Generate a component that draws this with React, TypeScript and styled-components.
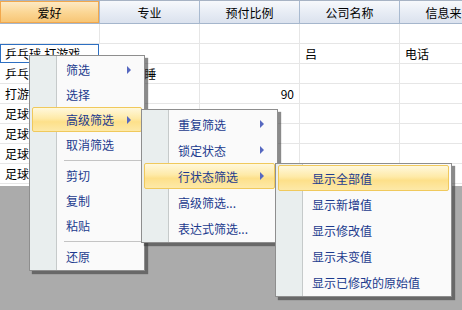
import React from "react";
import styled, { createGlobalStyle, css } from "styled-components";

const GlobalStyle = createGlobalStyle`
  html, body {
    margin: 0;
    padding: 0;
    background: #ababab;
    font-family: "Noto Sans CJK SC", "Noto Sans", sans-serif;
  }
`;

const Page = styled.div`
  position: relative;
  width: 462px;
  height: 310px;
  overflow: hidden;
  background: #ababab;
`;

const Grid = styled.div`
  background: #fff;
  height: 186px;
  font-size: 12px;
  color: #000;
`;

const HeaderRow = styled.div`
  display: flex;
  height: 24px;
  box-sizing: border-box;
  border-top: 1px solid #a7b3c4;
  border-bottom: 1px solid #a5b6cc;
`;

const HeaderCell = styled.div<{ $active?: boolean }>`
  flex: 0 0 100px;
  box-sizing: border-box;
  display: flex;
  align-items: center;
  justify-content: center;
  white-space: nowrap;
  overflow: hidden;
  border-right: 1px solid #a9bad0;
  background: linear-gradient(to bottom, #f7f9fc 0%, #e8edf5 50%, #dbe2ee 100%);
  ${(p) =>
    p.$active &&
    css`
      background: linear-gradient(to bottom, #fdebc9 0%, #fbd796 50%, #f7c472 100%);
      box-shadow: inset 0 0 0 1px #f2a84c;
    `}
`;

const Row = styled.div`
  display: flex;
  height: 20px;
`;

const Cell = styled.div<{ $right?: boolean; $selected?: boolean }>`
  flex: 0 0 100px;
  box-sizing: border-box;
  height: 20px;
  line-height: 19px;
  padding: 0 5px;
  white-space: nowrap;
  overflow: hidden;
  border-right: 1px solid #e6e6e6;
  border-bottom: 1px solid #e6e6e6;
  text-align: ${(p) => (p.$right ? "right" : "left")};
  ${(p) =>
    p.$selected &&
    css`
      box-shadow: inset 0 0 0 1px #2d6fc2;
      border-color: transparent;
    `}
`;

const Menu = styled.div<{ $x: number; $y: number; $w: number; $z: number }>`
  position: absolute;
  left: ${(p) => p.$x}px;
  top: ${(p) => p.$y}px;
  width: ${(p) => p.$w}px;
  z-index: ${(p) => p.$z};
  box-sizing: border-box;
  display: flex;
  flex-direction: column;
  padding: 1px 0;
  background: linear-gradient(to right, #e9eeee 0 26px, #c6caca 26px 27px, #fafafa 27px);
  border: 1px solid #8e8e8e;
  box-shadow: 3px 3px 1px rgba(60, 60, 60, 0.6);
  font-size: 12px;
`;

const Item = styled.div<{ $h: number; $hot?: boolean }>`
  display: flex;
  align-items: center;
  height: ${(p) => p.$h}px;
  padding: 0 13px 0 36px;
  color: #1c3a8e;
  white-space: nowrap;
  ${(p) =>
    p.$hot &&
    css`
      margin: 0 2px;
      padding: 0 10px 0 33px;
      height: ${p.$h - 2}px;
      border: 1px solid #f0c95c;
      border-radius: 2px;
      background: linear-gradient(to bottom, #fff8dc 0%, #feeaa8 45%, #fde08a 60%, #fde9a8 100%);
    `}
`;

const Label = styled.span`
  flex: 1;
`;

const Arrow = styled.span`
  width: 0;
  height: 0;
  border-top: 4px solid transparent;
  border-bottom: 4px solid transparent;
  border-left: 4px solid #5668c0;
`;

const Separator = styled.div`
  height: 6px;
  display: flex;
  align-items: center;
  padding: 0 1px 0 34px;

  &::after {
    content: "";
    flex: 1;
    border-top: 1px solid #c4c4c4;
  }
`;

const columns = ["爱好", "专业", "预付比例", "公司名称", "信息来源"];

const rows: { cells: string[]; right?: number; selected?: number }[] = [
  { cells: ["", "", "", "", ""] },
  { cells: ["乒乓球,打游戏", "", "", "吕", "电话"], selected: 0 },
  { cells: ["乒乓球", "吃喝玩,睡", "", "", ""] },
  { cells: ["打游戏", "", "90", "", ""], right: 2 },
  { cells: ["足球", "", "", "", ""] },
  { cells: ["足球", "", "", "", ""] },
  { cells: ["足球", "", "", "", ""] },
  { cells: ["足球", "", "", "", ""] },
];

type Entry = { label?: string; hot?: boolean; sub?: boolean; sep?: boolean };

const mainMenu: Entry[] = [
  { label: "筛选", sub: true },
  { label: "选择" },
  { label: "高级筛选", sub: true, hot: true },
  { label: "取消筛选" },
  { sep: true },
  { label: "剪切" },
  { label: "复制" },
  { label: "粘贴" },
  { sep: true },
  { label: "还原" },
];

const filterMenu: Entry[] = [
  { label: "重复筛选", sub: true },
  { label: "锁定状态", sub: true },
  { label: "行状态筛选", sub: true, hot: true },
  { label: "高级筛选..." },
  { label: "表达式筛选..." },
];

const stateMenu: Entry[] = [
  { label: "显示全部值", hot: true },
  { label: "显示新增值" },
  { label: "显示修改值" },
  { label: "显示未变值" },
  { label: "显示已修改的原始值" },
];

interface PopupProps {
  x: number;
  y: number;
  w: number;
  z: number;
  h: number;
  entries: Entry[];
}

const Popup = ({ x, y, w, z, h, entries }: PopupProps) => (
  <Menu $x={x} $y={y} $w={w} $z={z}>
    {entries.map((e, i) =>
      e.sep ? (
        <Separator key={i} />
      ) : (
        <Item key={i} $h={h} $hot={e.hot}>
          <Label>{e.label}</Label>
          {e.sub && <Arrow />}
        </Item>
      )
    )}
  </Menu>
);

const App = () => {
  return (
    <Page>
      <GlobalStyle />
      <Grid>
        <HeaderRow>
          {columns.map((c, i) => (
            <HeaderCell key={c} $active={i === 0}>
              {c}
            </HeaderCell>
          ))}
        </HeaderRow>
        {rows.map((r, ri) => (
          <Row key={ri}>
            {r.cells.map((v, ci) => (
              <Cell key={ci} $right={r.right === ci} $selected={r.selected === ci}>
                {v}
              </Cell>
            ))}
          </Row>
        ))}
      </Grid>

      {/* cascading context menus lying over the grid */}
      <Popup x={29} y={55} w={116} z={1} h={25} entries={mainMenu} />
      <Popup x={141} y={109} w={137} z={2} h={26} entries={filterMenu} />
      <Popup x={275} y={163} w={177} z={3} h={26} entries={stateMenu} />
    </Page>
  );
};

export default App;
